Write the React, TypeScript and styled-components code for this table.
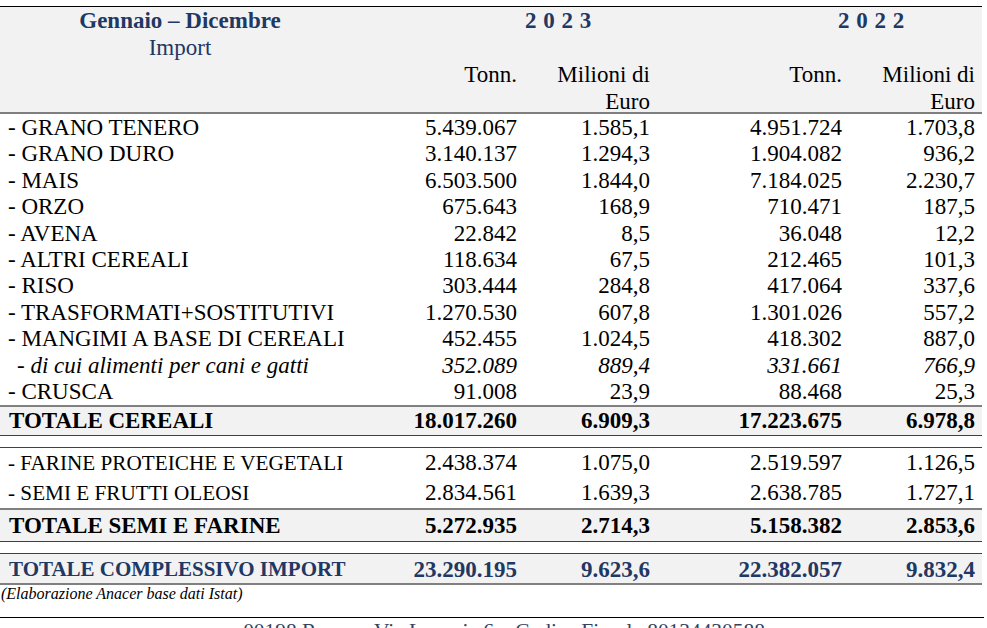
import React from "react";
import styled, { createGlobalStyle, css } from "styled-components";

const FONT = `"Liberation Serif", "Tinos", "Times New Roman", serif`;

const GlobalStyle = createGlobalStyle`
  html, body {
    margin: 0;
    padding: 0;
    overflow: hidden;
    background: #ffffff;
  }
  body {
    font-family: ${FONT};
    color: #000000;
  }
`;

const BLUE = "#1f3864";
const COLS = "360px 157px 133px 192px 133px";

const Page = styled.div`
  padding-top: 6px;
  width: 987px;
  height: 622px;
  overflow: hidden;
  font-family: ${FONT};
`;

const Table = styled.div`
  width: 982px;
  border-top: 1px solid #000000;
`;

const Header = styled.div`
  display: grid;
  grid-template-columns: ${COLS};
  grid-template-rows: 27px 78px;
  height: 105px;
  padding-right: 7px;
  background: #f2f2f2;
  border-bottom: 2px solid #7f7f7f;
  font-size: 23px;
`;

const HeadLabel = styled.div`
  grid-row: 1 / span 2;
  grid-column: 1;
  text-align: center;
  color: ${BLUE};
  line-height: 27px;
`;

const HeadTitle = styled.div`
  font-weight: bold;
`;

const YearCell = styled.div<{ $indent: number; $col: number }>`
  grid-row: 1;
  grid-column: ${(p) => p.$col} / span 2;
  padding-left: ${(p) => p.$indent}px;
  font-weight: bold;
  color: ${BLUE};
  line-height: 27px;
  letter-spacing: 0.5px;
  white-space: pre;
`;

const UnitCell = styled.div<{ $col: number }>`
  grid-row: 2;
  grid-column: ${(p) => p.$col};
  padding-top: 28px;
  text-align: right;
  line-height: 26.5px;
  white-space: nowrap;
`;

type Kind = "item" | "sub" | "wide" | "total" | "grand";

const Section = styled.div<{ $pad: string; $ruled?: boolean }>`
  padding: ${(p) => p.$pad};
  ${(p) =>
    p.$ruled &&
    css`
      border-top: 1px solid #404040;
    `}
`;

const Row = styled.div<{ $kind: Kind }>`
  display: grid;
  grid-template-columns: ${COLS};
  padding-right: 7px;
  font-size: 23px;
  white-space: nowrap;
  ${(p) => {
    switch (p.$kind) {
      case "item":
        return css`
          height: 26.4px;
          line-height: 26.4px;
        `;
      case "sub":
        return css`
          height: 26.4px;
          line-height: 26.4px;
          font-style: italic;
        `;
      case "wide":
        return css`
          height: 30px;
          line-height: 30px;
        `;
      case "total":
        return css`
          line-height: 28px;
          font-weight: bold;
          background: #f2f2f2;
          border-top: 2px solid #808080;
          border-bottom: 1px solid #404040;
        `;
      case "grand":
        return css`
          padding-top: 2px;
          line-height: 27px;
          font-weight: bold;
          color: ${BLUE};
          background: #f2f2f2;
          border-top: 1px solid #404040;
          border-bottom: 2px solid #808080;
        `;
    }
  }}
`;

const Label = styled.div<{ $indent: number; $size?: number }>`
  padding-left: ${(p) => p.$indent}px;
  ${(p) =>
    p.$size &&
    css`
      font-size: ${p.$size}px;
    `}
`;

const Num = styled.div`
  text-align: right;
`;

const Spacer = styled.div<{ $h: number }>`
  height: ${(p) => p.$h}px;
`;

const Source = styled.div`
  padding: 1px 0 0 1px;
  font-size: 16px;
  line-height: 16px;
  font-style: italic;
`;

const Footer = styled.div`
  margin-top: 15px;
  width: 984px;
  border-top: 1px solid #000000;
  padding: 3px 0 0 24px;
  box-sizing: border-box;
  text-align: center;
  font-size: 21.4px;
  line-height: 20px;
  color: #34425f;
  white-space: nowrap;
`;

type Item = [string, string, string, string, string];

const cereals: Item[] = [
  ["- GRANO TENERO", "5.439.067", "1.585,1", "4.951.724", "1.703,8"],
  ["- GRANO DURO", "3.140.137", "1.294,3", "1.904.082", "936,2"],
  ["- MAIS", "6.503.500", "1.844,0", "7.184.025", "2.230,7"],
  ["- ORZO", "675.643", "168,9", "710.471", "187,5"],
  ["- AVENA", "22.842", "8,5", "36.048", "12,2"],
  ["- ALTRI CEREALI", "118.634", "67,5", "212.465", "101,3"],
  ["- RISO", "303.444", "284,8", "417.064", "337,6"],
  ["- TRASFORMATI+SOSTITUTIVI", "1.270.530", "607,8", "1.301.026", "557,2"],
  ["- MANGIMI A BASE DI CEREALI", "452.455", "1.024,5", "418.302", "887,0"],
  ["- di cui alimenti per cani e gatti", "352.089", "889,4", "331.661", "766,9"],
  ["- CRUSCA", "91.008", "23,9", "88.468", "25,3"],
];

const seeds: Item[] = [
  ["- FARINE PROTEICHE E VEGETALI", "2.438.374", "1.075,0", "2.519.597", "1.126,5"],
  ["- SEMI E FRUTTI OLEOSI", "2.834.561", "1.639,3", "2.638.785", "1.727,1"],
];

const DataRow: React.FC<{ item: Item; kind: Kind; indent: number; labelSize?: number }> = ({
  item,
  kind,
  indent,
  labelSize,
}) => (
  <Row $kind={kind}>
    <Label $indent={indent} $size={labelSize}>
      {item[0]}
    </Label>
    <Num>{item[1]}</Num>
    <Num>{item[2]}</Num>
    <Num>{item[3]}</Num>
    <Num>{item[4]}</Num>
  </Row>
);

export default function App() {
  return (
    <>
      <GlobalStyle />
      <Page>
        <Table>
          <Header>
            <HeadLabel>
              <HeadTitle>Gennaio – Dicembre</HeadTitle>
              <div>Import</div>
            </HeadLabel>
            <YearCell $col={2} $indent={165}>2 0 2 3</YearCell>
            <YearCell $col={4} $indent={188}>2 0 2 2</YearCell>
            <UnitCell $col={2}>Tonn.</UnitCell>
            <UnitCell $col={3}>
              Milioni di
              <br />
              Euro
            </UnitCell>
            <UnitCell $col={4}>Tonn.</UnitCell>
            <UnitCell $col={5}>
              Milioni di
              <br />
              Euro
            </UnitCell>
          </Header>

          <Section $pad="1px 0 0 0">
            {cereals.map((it, i) => (
              <DataRow key={it[0]} item={it} kind={i === 9 ? "sub" : "item"} indent={i === 9 ? 17 : 8} />
            ))}
          </Section>
          <DataRow item={["TOTALE CEREALI", "18.017.260", "6.909,3", "17.223.675", "6.978,8"]} kind="total" indent={9} />

          <Spacer $h={11} />
          <Section $pad="0" $ruled>
            {seeds.map((it) => (
              <DataRow key={it[0]} item={it} kind="wide" indent={8} labelSize={21.2} />
            ))}
          </Section>
          <Row $kind="total" style={{ lineHeight: "31px" }}>
            <Label $indent={9}>TOTALE SEMI E FARINE</Label>
            <Num>5.272.935</Num>
            <Num>2.714,3</Num>
            <Num>5.158.382</Num>
            <Num>2.853,6</Num>
          </Row>

          <Spacer $h={11} />
          <DataRow
            item={["TOTALE COMPLESSIVO IMPORT", "23.290.195", "9.623,6", "22.382.057", "9.832,4"]}
            kind="grand"
            indent={9}
            labelSize={21}
          />

          <Source>(Elaborazione Anacer base dati Istat)</Source>
        </Table>
        <Footer>00198 Roma – Via Lucania 6 – Codice Fiscale 80134430588</Footer>
      </Page>
    </>
  );
}
